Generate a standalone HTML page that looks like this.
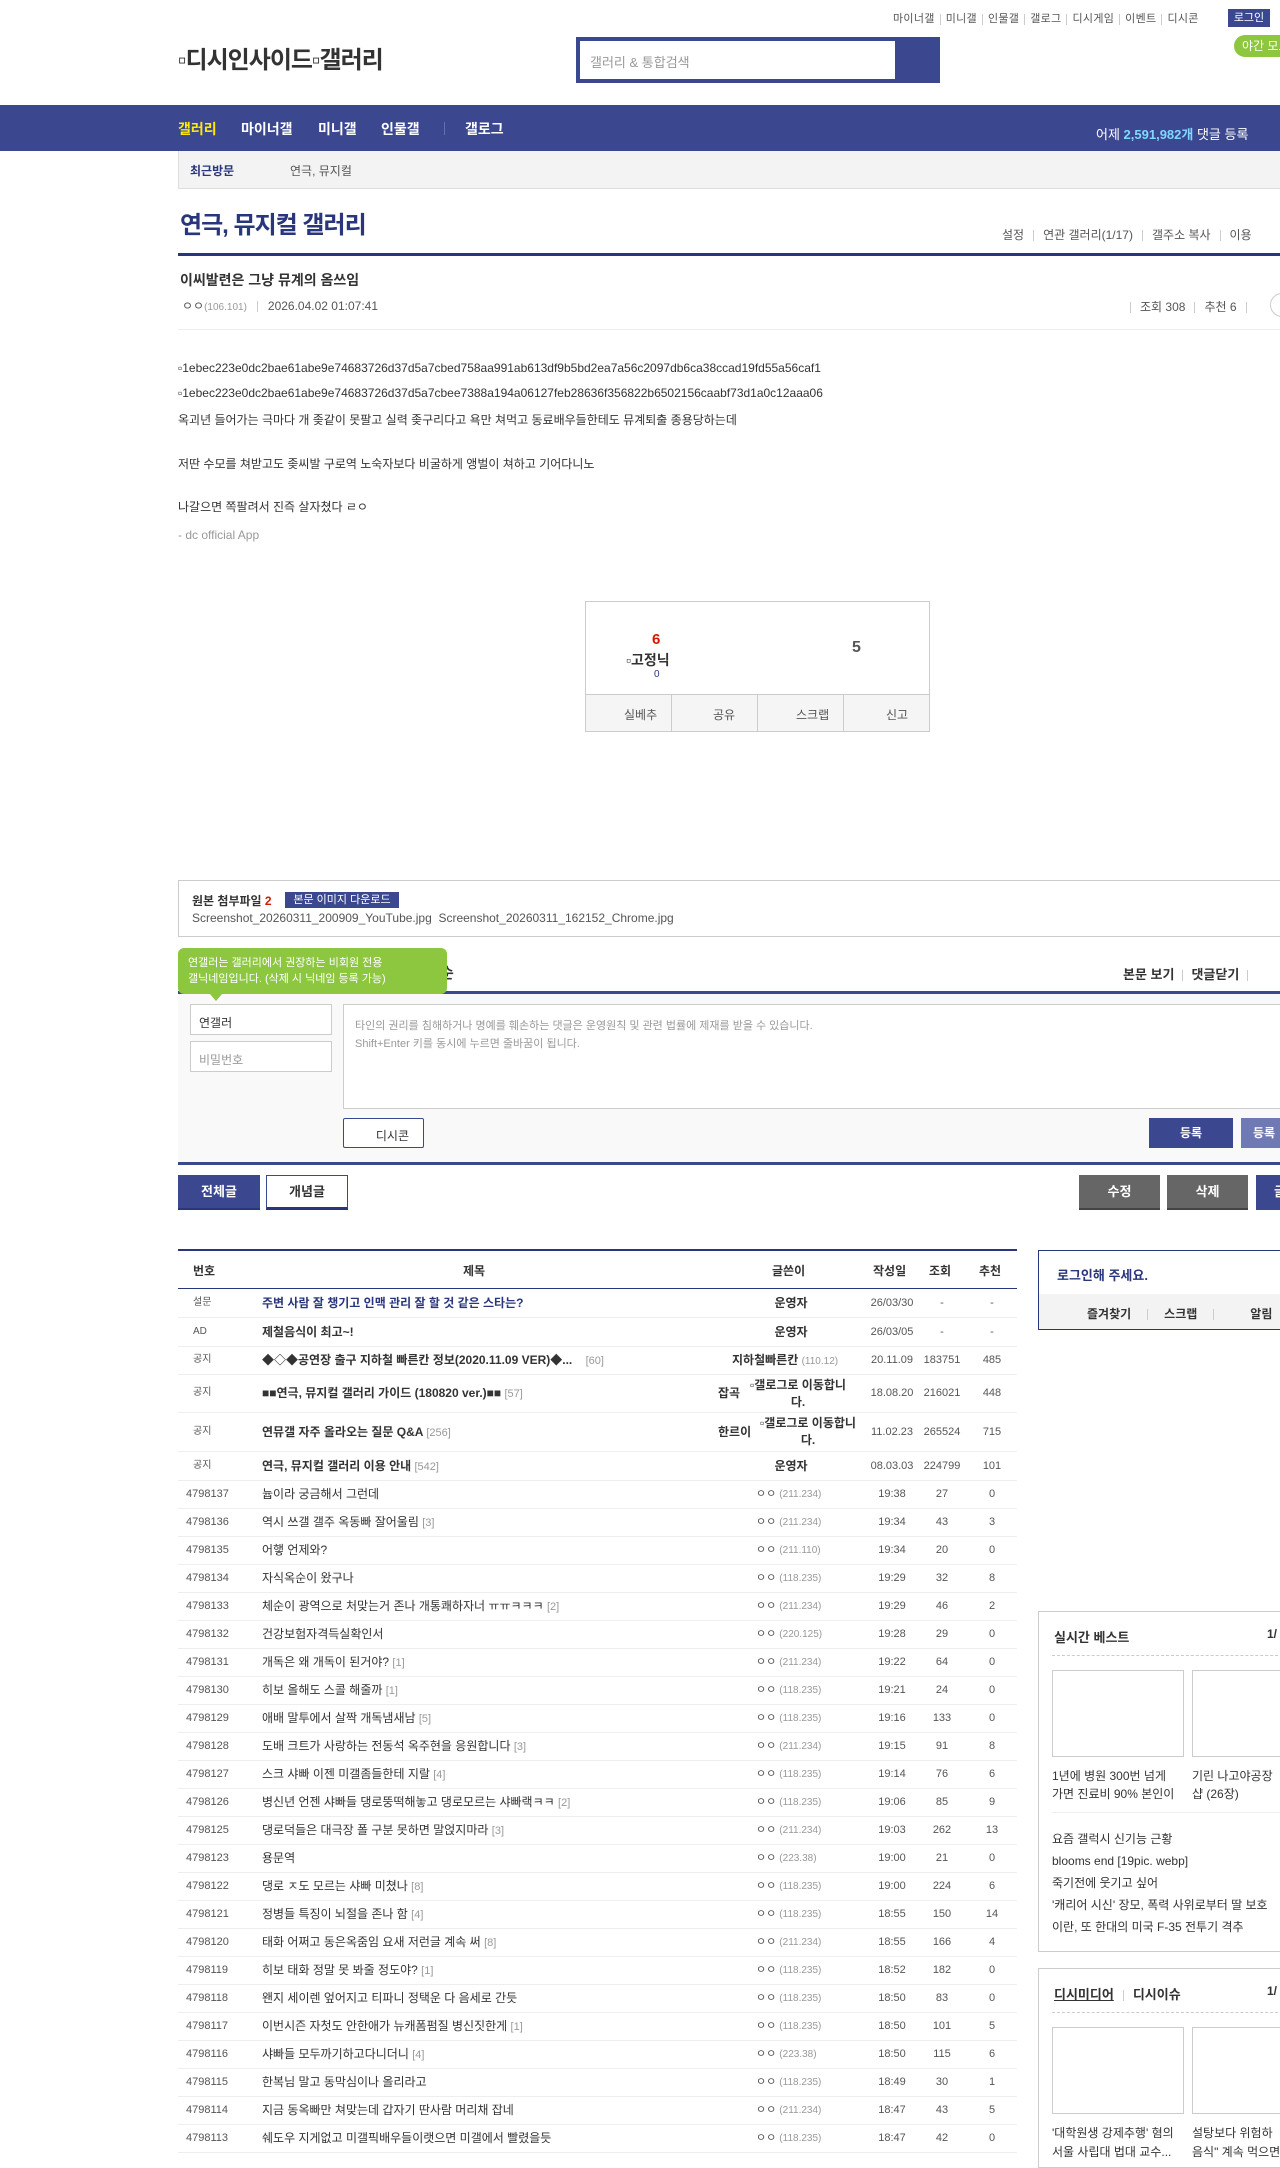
<!DOCTYPE html>
<html><head><meta charset="utf-8">
<style>
*{margin:0;padding:0;box-sizing:border-box}
body{width:1280px;height:2160px;overflow:hidden;position:relative;background:#fff;font-family:"Liberation Sans","Noto Sans CJK KR",sans-serif;color:#333;font-size:12px}
.a{position:absolute;white-space:nowrap}
.r{line-height:16px}
.sep{display:inline-block;width:1px;height:11px;background:#ccc;vertical-align:middle;margin:0 6px}
.row{position:absolute;left:178px;width:839px;border-bottom:1px solid #eee}
.cnt{color:#999;font-size:11px}
.ip{color:#999;font-size:10px}
.btn{position:absolute;text-align:center;font-weight:bold;font-size:13px}
</style></head><body>

<!-- top links -->
<div class="a" style="left:893px;top:10px;font-size:11px;color:#555;letter-spacing:0.3px">마이너갤<span class="sep" style="margin:0 5px"></span>미니갤<span class="sep" style="margin:0 5px"></span>인물갤<span class="sep" style="margin:0 5px"></span>갤로그<span class="sep" style="margin:0 5px"></span>디시게임<span class="sep" style="margin:0 5px"></span>이벤트<span class="sep" style="margin:0 5px"></span>디시콘</div>
<div class="a" style="left:1228px;top:9px;width:42px;height:18px;background:#3b4890;color:#fff;font-size:11px;text-align:center;line-height:18px">로그인</div>
<div class="a" style="left:1234px;top:35px;width:60px;height:22px;background:#8dc63f;border-radius:11px;color:#fff;font-size:12px;line-height:22px;padding-left:8px">야간 모드</div>

<!-- logo -->
<div class="a" style="left:178px;top:40px;font-size:24px;font-weight:bold;color:#333;letter-spacing:-1px">▫디시인사이드▫갤러리</div>
<!-- search -->
<div class="a" style="left:576px;top:37px;width:364px;height:46px;background:#3b4890"></div>
<div class="a" style="left:580px;top:41px;width:315px;height:38px;background:#fff"></div>
<div class="a" style="left:590px;top:52px;font-size:13px;color:#999">갤러리 &amp; 통합검색</div>

<!-- nav -->
<div class="a" style="left:0;top:105px;width:1280px;height:46px;background:#3b4890"></div>
<div class="a" style="left:178px;top:119px;font-size:14px;font-weight:bold;color:#ffea00">갤러리</div>
<div class="a" style="left:241px;top:119px;font-size:14px;font-weight:bold;color:#fff">마이너갤</div>
<div class="a" style="left:318px;top:119px;font-size:14px;font-weight:bold;color:#fff">미니갤</div>
<div class="a" style="left:381px;top:119px;font-size:14px;font-weight:bold;color:#fff">인물갤</div>
<div class="a" style="left:444px;top:122px;width:1px;height:13px;background:#6570aa"></div>
<div class="a" style="left:465px;top:119px;font-size:14px;font-weight:bold;color:#fff">갤로그</div>
<div class="a" style="left:1096px;top:124px;font-size:13px;color:#fff">어제 <b style="color:#7fd8ff">2,591,982개</b> 댓글 등록</div>

<!-- recent -->
<div class="a" style="left:178px;top:151px;width:1102px;height:38px;background:#f3f3f3;border-left:1px solid #ddd;border-bottom:1px solid #ddd"></div>
<div class="a" style="left:190px;top:162px;font-size:12px;font-weight:bold;color:#29367c">최근방문</div>
<div class="a" style="left:290px;top:162px;font-size:12px;color:#555">연극, 뮤지컬</div>

<!-- title -->
<div class="a" style="left:180px;top:205px;font-size:24px;font-weight:bold;color:#29367c;letter-spacing:-1px">연극, 뮤지컬 갤러리</div>
<div class="a" style="left:1002px;top:226px;font-size:12px;color:#555">설정<span class="sep" style="margin:0 9px"></span>연관 갤러리(1/17)<span class="sep" style="margin:0 9px"></span>갤주소 복사<span class="sep" style="margin:0 9px"></span>이용</div>
<div class="a" style="left:178px;top:253px;width:1102px;height:3px;background:#29367c"></div>

<div class="a" style="left:180px;top:270px;font-size:14px;font-weight:bold;color:#333">이씨발련은 그냥 뮤계의 옴쓰임</div>
<div class="a" style="left:182px;top:297px;font-size:12px;color:#555">ㅇㅇ<span class="ip">(106.101)</span><span class="sep" style="margin:0 10px"></span>2026.04.02 01:07:41</div>
<div class="a" style="left:1130px;top:298px;font-size:12px;color:#555"><span class="sep" style="margin:0 9px 0 0"></span>조회 308<span class="sep" style="margin:0 9px"></span>추천 6<span class="sep" style="margin:0 9px"></span></div>
<div class="a" style="left:1270px;top:293px;width:24px;height:24px;border:1px solid #ccc;border-radius:12px"></div>
<div class="a" style="left:178px;top:329px;width:1102px;height:1px;background:#eee"></div>

<!-- body -->
<div class="a" style="left:178px;top:361px;font-size:12px;color:#333">▫1ebec223e0dc2bae61abe9e74683726d37d5a7cbed758aa991ab613df9b5bd2ea7a56c2097db6ca38ccad19fd55a56caf1</div>
<div class="a" style="left:178px;top:386px;font-size:12px;color:#333">▫1ebec223e0dc2bae61abe9e74683726d37d5a7cbee7388a194a06127feb28636f356822b6502156caabf73d1a0c12aaa06</div>
<div class="a" style="left:178px;top:411px;font-size:12px;color:#333">옥괴년 들어가는 극마다 개 좆같이 못팔고 실력 좆구리다고 욕만 쳐먹고 동료배우들한테도 뮤계퇴출 종용당하는데</div>
<div class="a" style="left:178px;top:455px;font-size:12px;color:#333">저딴 수모를 쳐받고도 좆씨발 구로역 노숙자보다 비굴하게 앵벌이 쳐하고 기어다니노</div>
<div class="a" style="left:178px;top:498px;font-size:12px;color:#333">나갈으면 쪽팔려서 진즉 살자쳤다 ㄹㅇ</div>
<div class="a" style="left:178px;top:528px;font-size:12px;color:#999">- dc official App</div>

<!-- vote box -->
<div class="a" style="left:585px;top:601px;width:345px;height:131px;border:1px solid #ccc"></div>
<div class="a" style="left:586px;top:694px;width:343px;height:37px;background:#f5f5f5;border-top:1px solid #ccc"></div>
<div class="a" style="left:652px;top:631px;font-size:15px;font-weight:bold;color:#d31900">6</div>
<div class="a" style="left:626px;top:650px;font-size:14px;font-weight:bold;color:#333">▫고정닉</div>
<div class="a" style="left:654px;top:669px;font-size:10px;color:#29367c">0</div>
<div class="a" style="left:852px;top:639px;font-size:16px;font-weight:bold;color:#555">5</div>
<div class="a" style="left:671px;top:695px;width:1px;height:36px;background:#ccc"></div>
<div class="a" style="left:757px;top:695px;width:1px;height:36px;background:#ccc"></div>
<div class="a" style="left:843px;top:695px;width:1px;height:36px;background:#ccc"></div>
<div class="a" style="left:624px;top:706px;font-size:12px;color:#555">실베추</div>
<div class="a" style="left:713px;top:706px;font-size:12px;color:#555">공유</div>
<div class="a" style="left:796px;top:706px;font-size:12px;color:#555">스크랩</div>
<div class="a" style="left:886px;top:706px;font-size:12px;color:#555">신고</div>

<!-- attachment -->
<div class="a" style="left:178px;top:880px;width:1110px;height:57px;border:1px solid #ccc"></div>
<div class="a" style="left:192px;top:892px;font-size:12px;font-weight:bold;color:#333">원본 첨부파일 <span style="color:#d31900">2</span></div>
<div class="a" style="left:285px;top:892px;width:114px;height:16px;background:#3b4890;color:#fff;font-size:11px;line-height:16px;text-align:center">본문 이미지 다운로드</div>
<div class="a" style="left:192px;top:911px;font-size:12px;color:#555">Screenshot_20260311_200909_YouTube.jpg&nbsp; Screenshot_20260311_162152_Chrome.jpg</div>

<!-- comments -->
<div class="a" style="left:178px;top:994px;width:1102px;height:168px;background:#f9f9f9"></div>
<div class="a" style="left:178px;top:991px;width:1102px;height:3px;background:#3b4890"></div>
<div class="a" style="left:440px;top:962px;font-size:15px;font-weight:bold;color:#333">순</div>
<div class="a" style="left:1123px;top:964px;font-size:13px;font-weight:bold;color:#333">본문 보기<span class="sep" style="margin:0 8px"></span>댓글닫기<span class="sep" style="margin:0 8px"></span></div>
<div class="a" style="left:178px;top:948px;width:269px;height:46px;background:#8dc63f;border-radius:6px;color:#fff;font-size:11px;line-height:16px;padding:7px 0 0 10px">연갤러는 갤러리에서 권장하는 비회원 전용<br>갤닉네임입니다. (삭제 시 닉네임 등록 가능)</div>
<div class="a" style="left:210px;top:994px;width:0;height:0;border-left:6px solid transparent;border-right:6px solid transparent;border-top:7px solid #8dc63f"></div>
<div class="a" style="left:190px;top:1004px;width:142px;height:31px;border:1px solid #ccc;background:#fff;font-size:12px;color:#333;padding:9px 0 0 8px">연갤러</div>
<div class="a" style="left:190px;top:1041px;width:142px;height:31px;border:1px solid #ccc;background:#fff;font-size:12px;color:#999;padding:9px 0 0 8px">비밀번호</div>
<div class="a" style="left:343px;top:1004px;width:950px;height:105px;border:1px solid #ccc;background:#fff;font-size:11px;color:#999;line-height:18px;padding:12px 0 0 11px">타인의 권리를 침해하거나 명예를 훼손하는 댓글은 운영원칙 및 관련 법률에 제재를 받을 수 있습니다.<br>Shift+Enter 키를 동시에 누르면 줄바꿈이 됩니다.</div>
<div class="a" style="left:343px;top:1118px;width:81px;height:30px;border:1px solid #3b4890;border-radius:2px;background:#fff;font-size:12px;color:#333;text-align:right;padding:8px 14px 0 0">디시콘</div>
<div class="btn" style="left:1149px;top:1118px;width:84px;height:30px;background:#3b4890;color:#fff;line-height:30px;font-size:12px">등록</div>
<div class="btn" style="left:1241px;top:1118px;width:60px;height:30px;background:#6f7ab5;color:#fff;line-height:30px;font-size:12px;text-align:left;padding-left:12px">등록</div>
<div class="a" style="left:178px;top:1162px;width:1102px;height:3px;background:#3b4890"></div>

<div class="btn" style="left:178px;top:1175px;width:82px;height:35px;background:#3b4890;color:#fff;line-height:33px;border-bottom:2px solid #29367c">전체글</div>
<div class="btn" style="left:266px;top:1175px;width:82px;height:35px;background:#fff;color:#333;line-height:31px;border:1px solid #3b4890;border-bottom:3px solid #29367c">개념글</div>
<div class="btn" style="left:1079px;top:1175px;width:81px;height:35px;background:#666;color:#fff;line-height:33px;border-bottom:2px solid #444">수정</div>
<div class="btn" style="left:1167px;top:1175px;width:81px;height:35px;background:#666;color:#fff;line-height:33px;border-bottom:2px solid #444">삭제</div>
<div class="btn" style="left:1256px;top:1175px;width:40px;height:35px;background:#3b4890;color:#fff;line-height:33px;text-align:left;padding-left:18px">글</div>

<!-- table -->
<div class="a" style="left:178px;top:1249px;width:839px;height:2px;background:#29367c"></div>
<div class="a" style="left:178px;top:1288px;width:839px;height:1px;background:#29367c"></div>
<div class="a r" style="left:193px;top:1263px;font-weight:bold;font-size:12px;color:#333">번호</div>
<div class="a r" style="left:463px;top:1263px;font-weight:bold;font-size:12px;color:#333">제목</div>
<div class="a r" style="left:772px;top:1263px;font-weight:bold;font-size:12px;color:#333">글쓴이</div>
<div class="a r" style="left:873px;top:1263px;font-weight:bold;font-size:12px;color:#333">작성일</div>
<div class="a r" style="left:929px;top:1263px;font-weight:bold;font-size:12px;color:#333">조회</div>
<div class="a r" style="left:979px;top:1263px;font-weight:bold;font-size:12px;color:#333">추천</div>

<div id="rows"></div>

<!-- sidebar login -->
<div class="a" style="left:1038px;top:1250px;width:250px;height:80px;border:1px solid #29367c;background:#fff"></div>
<div class="a" style="left:1039px;top:1294px;width:249px;height:35px;background:#f3f3f3"></div>
<div class="a" style="left:1057px;top:1265px;font-size:13px;font-weight:bold;color:#29367c">로그인해 주세요.</div>
<div class="a" style="left:1087px;top:1305px;font-size:12px;font-weight:bold;color:#333">즐겨찾기<span class="sep" style="margin:0 16px"></span>스크랩<span class="sep" style="margin:0 16px"></span>&nbsp;&nbsp;&nbsp;&nbsp;&nbsp;&nbsp;알림</div>

<!-- best box -->
<div class="a" style="left:1038px;top:1611px;width:250px;height:341px;border:1px solid #ccc"></div>
<div class="a" style="left:1054px;top:1627px;font-size:13px;font-weight:bold;color:#333">실시간 베스트</div>
<div class="a" style="left:1267px;top:1627px;font-size:12px;font-weight:bold;color:#333">1/</div>
<div class="a" style="left:1052px;top:1655px;width:236px;border-top:1px dashed #ccc"></div>
<div class="a" style="left:1052px;top:1670px;width:132px;height:87px;border:1px solid #ccc"></div>
<div class="a" style="left:1192px;top:1670px;width:132px;height:87px;border:1px solid #ccc"></div>
<div class="a" style="left:1052px;top:1767px;font-size:12px;color:#333;line-height:18px">1년에 병원 300번 넘게<br>가면 진료비 90% 본인이</div>
<div class="a" style="left:1192px;top:1767px;font-size:12px;color:#333;line-height:18px">기린 나고야공장<br>샵 (26장)</div>
<div class="a" style="left:1052px;top:1812px;width:236px;height:1px;background:#eee"></div>
<div class="a" style="left:1052px;top:1828px;font-size:12px;color:#333;line-height:22px">요즘 갤럭시 신기능 근황<br>blooms end [19pic. webp]<br>죽기전에 웃기고 싶어<br>'캐리어 시신' 장모, 폭력 사위로부터 딸 보호<br>이란, 또 한대의 미국 F-35 전투기 격추</div>

<!-- media box -->
<div class="a" style="left:1038px;top:1968px;width:250px;height:200px;border:1px solid #ccc"></div>
<div class="a" style="left:1054px;top:1984px;font-size:13px;font-weight:bold;color:#333"><u>디시미디어</u><span class="sep" style="margin:0 9px"></span>디시이슈</div>
<div class="a" style="left:1267px;top:1984px;font-size:12px;font-weight:bold;color:#333">1/</div>
<div class="a" style="left:1052px;top:2012px;width:236px;border-top:1px dashed #ccc"></div>
<div class="a" style="left:1052px;top:2027px;width:132px;height:87px;border:1px solid #ccc"></div>
<div class="a" style="left:1192px;top:2027px;width:132px;height:87px;border:1px solid #ccc"></div>
<div class="a" style="left:1052px;top:2124px;font-size:12px;color:#333;line-height:19px">'대학원생 강제추행' 혐의<br>서울 사립대 법대 교수...</div>
<div class="a" style="left:1192px;top:2124px;font-size:12px;color:#333;line-height:19px">설탕보다 위험하<br>음식" 계속 먹으면</div>

<script>
var R=document.getElementById('rows'),h='';
function row(top,bot,num,title,cnt,writer,date,v,r,bold,tcolor,numsmall){
 var c=Math.round((top+bot)/2-8);
 h+='<div class="row" style="top:'+top+'px;height:'+(bot-top+1)+'px"></div>';
 h+='<span class="a r" style="left:'+(numsmall?193:186)+'px;top:'+c+'px;font-size:'+(numsmall?10:11)+'px;color:#555">'+num+'</span>';
 h+='<span class="a r" style="left:262px;top:'+c+'px;font-size:12px;'+(bold?'font-weight:bold;':'')+'color:'+(tcolor||'#333')+'">'+title+(cnt?' <span class="cnt" style="font-weight:normal">['+cnt+']</span>':'')+'</span>';
 h+=writer.replace(/TOP/g,c);
 h+='<span class="a r" style="left:870px;width:44px;text-align:center;top:'+c+'px;font-size:11px;color:#555">'+date+'</span>';
 h+='<span class="a r" style="left:920px;width:44px;text-align:center;top:'+c+'px;font-size:11px;color:#555">'+v+'</span>';
 h+='<span class="a r" style="left:970px;width:44px;text-align:center;top:'+c+'px;font-size:11px;color:#555">'+r+'</span>';
}
function op(){return '<span class="a r" style="left:760px;width:62px;text-align:center;top:TOPpx;font-size:12px;font-weight:bold;color:#333">운영자</span>';}
function ip(a){return '<span class="a r" style="left:756px;top:TOPpx;font-size:11px;color:#555">ㅇㅇ <span class="ip">('+a+')</span></span>';}
row(1289,1317,'설문','주변 사람 잘 챙기고 인맥 관리 잘 할 것 같은 스타는?','',op(),'26/03/30','-','-',1,'#29367c',1);
row(1317,1346,'AD','제철음식이 최고~!','',op(),'26/03/05','-','-',1,0,1);
row(1346,1374,'공지','◆◇◆공연장 출구 지하철 빠른칸 정보(2020.11.09 VER)◆...&nbsp;&nbsp;&nbsp;&nbsp;<span class="cnt" style="font-weight:normal">[60]</span>','','<span class="a r" style="left:732px;top:TOPpx;font-size:12px;font-weight:bold;color:#333">지하철빠른칸 <span class="ip" style="font-weight:normal">(110.12)</span></span>','20.11.09','183751','485',1,0,1);
row(1374,1412,'공지','■■연극, 뮤지컬 갤러리 가이드 (180820 ver.)■■','57','<span class="a r" style="left:718px;top:TOPpx;font-size:12px;font-weight:bold;color:#333">잡곡</span><span class="a" style="left:746px;top:1377px;width:104px;text-align:center;font-size:12px;font-weight:bold;color:#333;line-height:17px;white-space:normal">▫갤로그로 이동합니다.</span>','18.08.20','216021','448',1,0,1);
row(1412,1451,'공지','연뮤갤 자주 올라오는 질문 Q&amp;A','256','<span class="a r" style="left:718px;top:TOPpx;font-size:12px;font-weight:bold;color:#333">한르이</span><span class="a" style="left:758px;top:1415px;width:100px;text-align:center;font-size:12px;font-weight:bold;color:#333;line-height:17px;white-space:normal">▫갤로그로 이동합니다.</span>','11.02.23','265524','715',1,0,1);
row(1451,1480,'공지','연극, 뮤지컬 갤러리 이용 안내','542',op(),'08.03.03','224799','101',1,0,1);
var d=[
['4798137','늅이라 궁금해서 그런데','','211.234','19:38','27','0'],
['4798136','역시 쓰갤 갤주 옥동빠 잘어울림','3','211.234','19:34','43','3'],
['4798135','어햏 언제와?','','211.110','19:34','20','0'],
['4798134','자식옥순이 왔구나','','118.235','19:29','32','8'],
['4798133','체순이 광역으로 처맞는거 존나 개통쾌하자너 ㅠㅠㅋㅋㅋ','2','211.234','19:29','46','2'],
['4798132','건강보험자격득실확인서','','220.125','19:28','29','0'],
['4798131','개독은 왜 개독이 된거야?','1','211.234','19:22','64','0'],
['4798130','히보 올해도 스콜 해줄까','1','118.235','19:21','24','0'],
['4798129','애배 말투에서 살짝 개독냄새남','5','118.235','19:16','133','0'],
['4798128','도배 크트가 사랑하는 전동석 옥주현을 응원합니다','3','211.234','19:15','91','8'],
['4798127','스크 샤빠 이젠 미갤좀들한테 지랄','4','118.235','19:14','76','6'],
['4798126','병신년 언젠 샤빠들 댕로뚱떡해놓고 댕로모르는 샤빠랙ㅋㅋ','2','118.235','19:06','85','9'],
['4798125','댕로덕들은 대극장 폴 구분 못하면 말얹지마라','3','211.234','19:03','262','13'],
['4798123','용문역','','223.38','19:00','21','0'],
['4798122','댕로 ㅈ도 모르는 샤빠 미쳤나','8','118.235','19:00','224','6'],
['4798121','정병들 특징이 뇌절을 존나 함','4','118.235','18:55','150','14'],
['4798120','태화 어쩌고 동은옥줌임 요새 저런글 계속 써','8','211.234','18:55','166','4'],
['4798119','히보 태화 정말 못 봐줄 정도야?','1','118.235','18:52','182','0'],
['4798118','왠지 세이렌 엎어지고 티파니 정택운 다 음세로 간듯','','118.235','18:50','83','0'],
['4798117','이번시즌 자첫도 안한애가 뉴캐폼펌질 병신짓한게','1','118.235','18:50','101','5'],
['4798116','샤빠들 모두까기하고다니더니','4','223.38','18:50','115','6'],
['4798115','한복님 말고 동막심이나 올리라고','','118.235','18:49','30','1'],
['4798114','지금 동옥빠만 쳐맞는데 갑자기 딴사람 머리채 잡네','','211.234','18:47','43','5'],
['4798113','쉐도우 지게없고 미갤픽배우들이랫으면 미갤에서 빨렸을듯','','118.235','18:47','42','0']];
for(var i=0;i<d.length;i++){var t=1480+i*28;var x=d[i];row(t,t+28,x[0],x[1],x[2],ip(x[3]),x[4],x[5],x[6],0,0,0);}
R.innerHTML=h;
</script>
</body></html>
